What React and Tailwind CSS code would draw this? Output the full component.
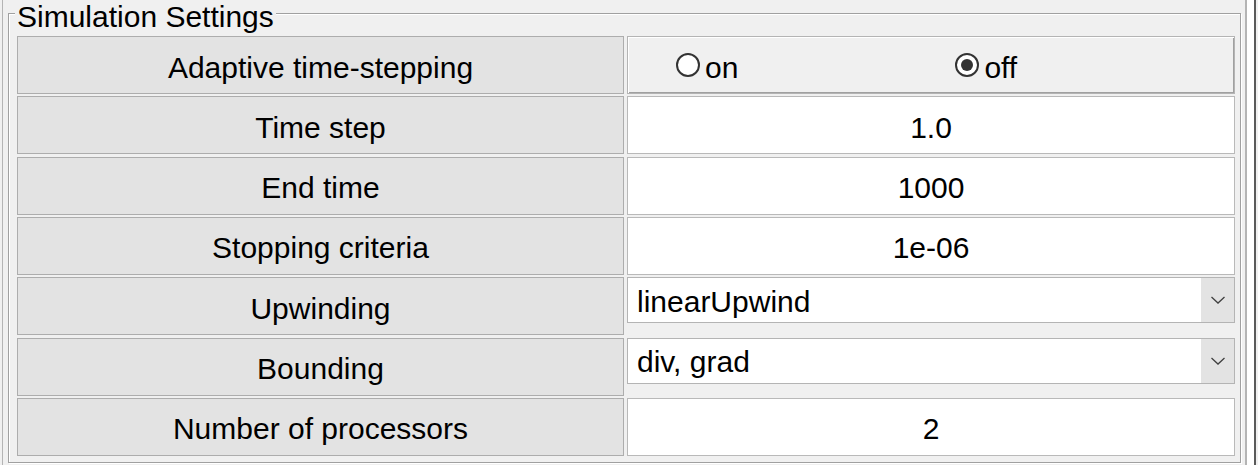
import React from "react";

const font = { fontFamily: '"Liberation Sans", Arial, sans-serif' };

function Label({ children }) {
  return (
    <div className="h-[58px] border border-[#adadad] bg-[#e3e3e3] flex items-center justify-center pt-[4px] text-[30px] text-black">
      {children}
    </div>
  );
}

function Edit({ children }) {
  return (
    <div className="h-[58px] border border-[#b9b9b9] bg-white flex items-center justify-center pt-[4px] text-[30px] text-black">
      {children}
    </div>
  );
}

function Combo({ children }) {
  return (
    <div className="h-[58px] flex flex-col">
      <div className="h-[46px] border border-[#b4b4b4] bg-white flex items-stretch text-[30px] text-black">
        <div className="flex-1 flex items-center pl-[9px] pt-[2px]">{children}</div>
        <div className="w-[33px] bg-[#e3e3e3] flex items-center justify-center">
          <svg width="16" height="10" viewBox="0 0 16 10">
            <path d="M1.5 2 L8 8 L14.5 2" fill="none" stroke="#404040" strokeWidth="1.3" />
          </svg>
        </div>
      </div>
    </div>
  );
}

function Radio({ checked, label, className }) {
  return (
    <div className={"flex items-center " + className}>
      <div className="w-[24px] h-[24px] rounded-full border-2 border-[#333333] bg-white flex items-center justify-center">
        {checked && <div className="w-[12px] h-[12px] rounded-full bg-[#333333]" />}
      </div>
      <span className="ml-[5px] pt-[4px] text-[30px] text-black">{label}</span>
    </div>
  );
}

export default function App() {
  return (
    <div
      className="w-[1258px] h-[465px] bg-[#f0f0f0] flex overflow-hidden"
      style={font}
    >
      <div className="w-[2px] shrink-0" />
      <div className="w-[1px] shrink-0 bg-[#b4b4b4]" />
      <div className="w-[5px] shrink-0" />
      <div className="shrink-0 w-[1233px] pt-[13px]">
        <div className="relative h-[450px] border border-[#a0a0a0] shadow-[inset_1px_1px_0_#ffffff,1px_1px_0_#ffffff] pt-[22px] pl-[8px] pr-[5px]">
          <div className="absolute left-[6px] top-[-12px] px-[2px] bg-[#f0f0f0] text-[30px] leading-[29px] text-black">
            Simulation Settings
          </div>
          <div className="grid grid-cols-[607px_608px] gap-x-[3px] gap-y-[2.33px]">
            <Label>Adaptive time-stepping</Label>
            <div className="h-[58px] border border-[#b4b4b4] bg-[#f0f0f0] shadow-[inset_1px_1px_0_#ffffff,inset_-1px_-1px_0_#a0a0a0] flex items-center">
              <Radio label="on" className="ml-[48px]" />
              <Radio checked label="off" className="ml-[217px]" />
            </div>
            <Label>Time step</Label>
            <Edit>1.0</Edit>
            <Label>End time</Label>
            <Edit>1000</Edit>
            <Label>Stopping criteria</Label>
            <Edit>1e-06</Edit>
            <Label>Upwinding</Label>
            <Combo>linearUpwind</Combo>
            <Label>Bounding</Label>
            <Combo>div, grad</Combo>
            <Label>Number of processors</Label>
            <Edit>2</Edit>
          </div>
        </div>
      </div>
      <div className="w-[4px] shrink-0" />
      <div className="w-[2px] shrink-0 bg-[#b4b4b4]" />
      <div className="w-[7px] shrink-0 bg-[#ffffff]" />
      <div className="w-[2px] shrink-0 bg-[#5a5a5a]" />
      <div className="flex-1" />
    </div>
  );
}
